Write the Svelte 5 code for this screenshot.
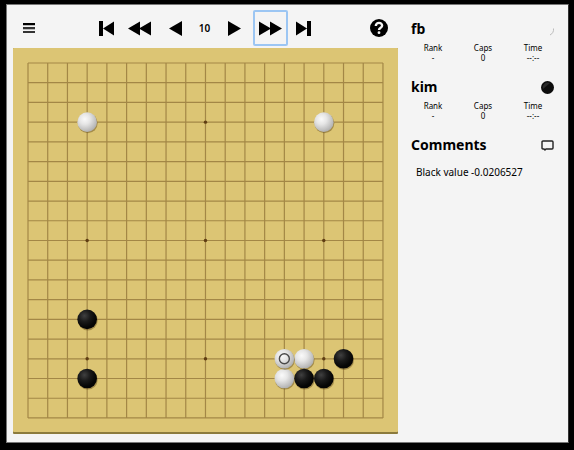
<script>
    const SIZE = 19;
    const STEP = 19.72;
    const EDGE = 15;
    const END = EDGE + (SIZE - 1) * STEP;

    const lines = Array.from({ length: SIZE }, (_, i) => at(i));
    const hoshi = [3, 9, 15];

    const stones = [
        { x: 3, y: 3, color: 'white' },
        { x: 15, y: 3, color: 'white' },
        { x: 3, y: 13, color: 'black' },
        { x: 3, y: 16, color: 'black' },
        { x: 14, y: 15, color: 'white' },
        { x: 16, y: 15, color: 'black' },
        { x: 13, y: 16, color: 'white' },
        { x: 14, y: 16, color: 'black' },
        { x: 15, y: 16, color: 'black' },
        { x: 13, y: 15, color: 'white', marked: true }
    ];

    const players = [
        { name: 'fb', color: 'white', rank: '-', caps: 0, time: '--:--' },
        { name: 'kim', color: 'black', rank: '-', caps: 0, time: '--:--' }
    ];

    const back = [
        { title: 'First', width: 15, d: 'M0 0h4v15H0zM4 7.500L15 0.500v14z' },
        { title: 'Back 5', width: 23, d: 'M0 7.500L12 0.500v14zM11 7.500L23 0.500v14z' },
        { title: 'Previous', width: 13, wide: true, d: 'M0 7.500L13 0v15z' }
    ];
    const forward = [
        { title: 'Next', width: 13, wide: true, d: 'M13 7.500L0 0v15z' },
        { title: 'Forward 5', width: 23, active: true, d: 'M12 7.500L0 0.500v14zM23 7.500L11 0.500v14z' },
        { title: 'Last', width: 15, d: 'M11 0h4v15h-4zM11 7.500L0 0.500v14z' }
    ];

    let move = $state(10);

    function at(i) {
        return EDGE + i * STEP;
    }
</script>

{#snippet control(c)}
    <button class="btn" class:wide={c.wide} class:active={c.active} aria-label={c.title}>
        <svg width={c.width} height="15" viewBox="0 0 {c.width} 15"><path d={c.d} /></svg>
    </button>
{/snippet}

<div class="player">
    <main class="left">
        <div class="toolbar">
            <button class="btn menu" aria-label="Menu">
                <svg width="12" height="10" viewBox="0 0 12 10">
                    <path d="M0 0h12v2H0z" />
                    <path d="M0 4h12v2H0zM0 8h12v2H0z" fill="#333" />
                    <path d="M0 2h12v1H0zM0 6h12v1H0z" fill="#bbb" />
                </svg>
            </button>
            <div class="controls">
                {#each back as c}{@render control(c)}{/each}
                <span class="move">{move}</span>
                {#each forward as c}{@render control(c)}{/each}
            </div>
            <button class="btn help" aria-label="Help">
                <svg width="18" height="18" viewBox="0 0 18 18">
                    <circle cx="9" cy="9" r="9" />
                    <path class="mark" d="M5.800 7C5.800 2.800 12.300 3 12.100 6.800C12 8.800 9 8.700 9 11" />
                    <circle class="dot" cx="9" cy="13.700" r="1.400" />
                </svg>
            </button>
        </div>

        <svg class="board" viewBox="0 0 385 386">
            <defs>
                <radialGradient id="black" cx="0.36" cy="0.32" r="0.6">
                    <stop offset="0" stop-color="#404040" />
                    <stop offset="0.5" stop-color="#1a1a1a" />
                    <stop offset="1" stop-color="#050505" />
                </radialGradient>
                <radialGradient id="white" cx="0.38" cy="0.34" r="0.68">
                    <stop offset="0" stop-color="#fafafa" />
                    <stop offset="0.4" stop-color="#e6e6e6" />
                    <stop offset="1" stop-color="#b0b0b0" />
                </radialGradient>
            </defs>
            <rect width="385" height="386" rx="1" fill="#8b7a3c" />
            <rect width="385" height="384" rx="1" fill="#dcc574" />
            {#each lines as p}
                <line class="grid" x1={p} x2={p} y1={EDGE} y2={END} />
                <line class="grid" x1={EDGE} x2={END} y1={p} y2={p} />
            {/each}
            {#each hoshi as x}
                {#each hoshi as y}
                    <circle cx={at(x)} cy={at(y)} r="1.700" fill="#5f3d12" />
                {/each}
            {/each}
            {#each stones as s}
                <circle cx={at(s.x) + 0.6} cy={at(s.y) + 1.2} r="9.900" fill="#6b5420" opacity="0.5" />
                <circle cx={at(s.x)} cy={at(s.y)} r="9.800" fill="url(#{s.color})" />
                {#if s.marked}
                    <circle class="ring" cx={at(s.x)} cy={at(s.y)} r="5" />
                {/if}
            {/each}
        </svg>
    </main>

    <aside class="right">
        {#each players as p}
            <section class="info">
                <header>
                    <h2>{p.name}</h2>
                    <svg width="13" height="13" viewBox="0 0 13 13">
                        {#if p.color === 'black'}
                            <circle cx="6.500" cy="6.500" r="6.500" fill="#0c0c0c" />
                            <path d="M2 8A5 5 0 0 1 9 2z" fill="#292929" />
                        {:else}
                            <path d="M12.500 5.500A6.500 6.500 0 0 1 9 12" fill="none" stroke="#bbb" />
                        {/if}
                    </svg>
                </header>
                <dl>
                    <div><dt>Rank</dt><dd>{p.rank}</dd></div>
                    <div><dt>Caps</dt><dd>{p.caps}</dd></div>
                    <div><dt>Time</dt><dd>{p.time}</dd></div>
                </dl>
            </section>
        {/each}
        <section class="comments">
            <header>
                <h2>Comments</h2>
                <svg width="13" height="12" viewBox="0 0 13 12">
                    <path class="bubble" d="M2 2h9q1 0 1 1v6q0 1-1 1H5L4 11L3 10H2q-1 0-1-1V3q0-1 1-1z" />
                </svg>
            </header>
            <p>Black value -0.0206527</p>
        </section>
    </aside>
</div>

<style>
    :global(body) {
        margin: 0;
        background: #000;
    }

    .player {
        display: grid;
        grid-template-columns: minmax(0, 1fr) 170px;
        margin: 4px 5px 6px 6px;
        padding: 0 0 8px 6px;
        border: 1px solid #777;
        border-right-color: #333;
        background: #f4f4f4;
        color: #000;
        font-family: "Noto Sans", "Open Sans", sans-serif;
    }

    .toolbar {
        display: grid;
        grid-template-columns: 1fr auto 1fr;
        align-items: center;
        padding: 5px 4px 2px;
    }

    .controls {
        display: flex;
        align-items: center;
        gap: 2px;
        margin-right: 2px;
    }

    .btn {
        display: flex;
        align-items: center;
        justify-content: center;
        height: 36px;
        padding: 0 4px;
        border: 2px solid transparent;
        border-radius: 2px;
        background: none;
        cursor: pointer;
    }

    .btn.wide {
        padding: 0 8px;
    }

    .btn.active {
        border-color: #9cc6f3;
    }

    .menu {
        justify-self: start;
    }

    .help {
        justify-self: end;
    }

    .mark {
        fill: none;
        stroke: #f4f4f4;
        stroke-width: 2.4;
    }

    .dot {
        fill: #f4f4f4;
    }

    .move {
        width: 22px;
        font-size: 10px;
        font-weight: 600;
        text-align: center;
    }

    .board {
        display: block;
        width: 100%;
    }

    .grid {
        stroke: #a38746;
        stroke-width: 1.2;
    }

    .ring {
        fill: none;
        stroke: #4a4a4a;
        stroke-width: 1.4;
    }

    .right {
        padding: 14px 10px 0;
    }

    .info {
        margin-bottom: 14px;
    }

    header {
        display: flex;
        align-items: center;
        justify-content: space-between;
        padding: 0 4px 0 3px;
    }

    h2 {
        margin: 0;
        font-size: 14px;
        line-height: 20px;
        font-weight: 700;
    }

    dl {
        display: grid;
        grid-template-columns: repeat(3, 1fr);
        margin: 4px 0 0;
        font-size: 8px;
        line-height: 10px;
        text-align: center;
    }

    dd {
        margin: 0;
    }

    .bubble {
        fill: none;
        stroke: #222;
        stroke-width: 1.4;
    }

    p {
        margin: 11px 8px 0;
        font-size: 10px;
        line-height: 12px;
    }
</style>
